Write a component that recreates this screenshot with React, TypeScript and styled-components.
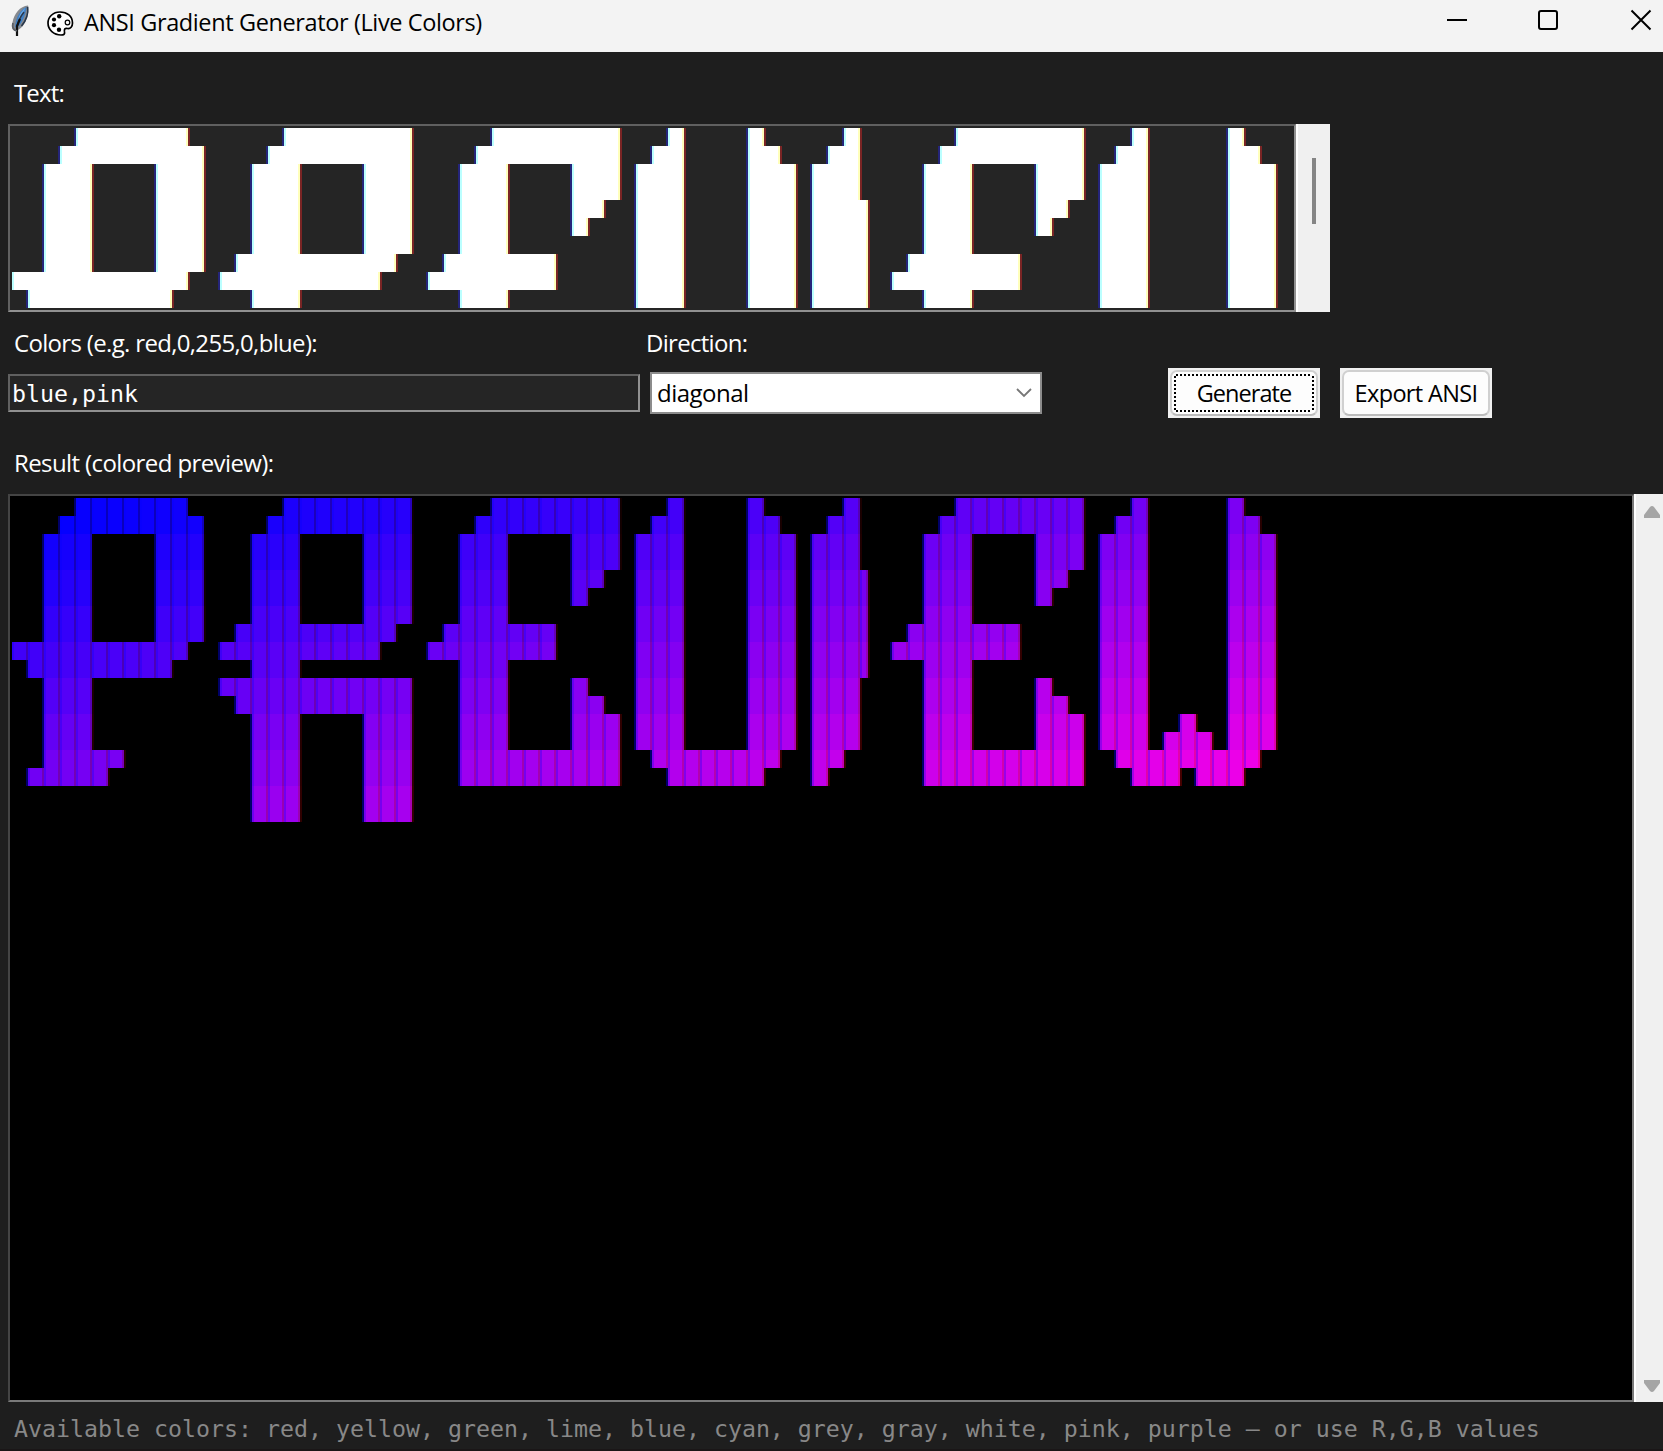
import React from "react";
import styled, { createGlobalStyle, css } from "styled-components";

const GlobalStyle = createGlobalStyle`
  *, *::before, *::after { box-sizing: border-box; }
  html, body { margin: 0; padding: 0; background: #1e1e1e; }
`;

const UI_FONT = `"Open Sans", "Noto Sans", sans-serif`;
const MONO_FONT = `"DejaVu Sans Mono", "Liberation Mono", monospace`;

/* ---------- block lettering ---------- */

type Letter = { width: number; lines: string[] };

const BAR = "  ███    ███";

const P: Letter = {
  width: 13,
  lines: ["   ▄███████▄", BAR, BAR, BAR, "▀█████████▀", "  ███", "  ███", " ▄████▀"],
};
const R: Letter = {
  width: 13,
  lines: ["   ▄████████", BAR, BAR, " ▄███▄▄▄▄██▀", "▀▀███▀▀▀▀▀", "▀███████████", BAR, BAR, BAR],
};
const E: Letter = {
  width: 13,
  lines: ["   ▄████████", BAR, "  ███    █▀", " ▄███▄▄▄", "▀▀███▀▀▀", "  ███    █▄", BAR, "  ██████████"],
};
const V: Letter = {
  width: 11,
  lines: [" ▄█    █▄", ...Array(6).fill("███    ███"), " ▀██████▀"],
};
const I: Letter = {
  width: 5,
  lines: [" ▄█", "███", "███▌", "███▌", "███▌", "███", "███", "█▀"],
};
const W: Letter = {
  width: 11,
  lines: [" ▄█     █▄", ...Array(5).fill("███     ███"), "███ ▄█▄ ███", " ▀███▀███▀"],
};

const LINE_COUNT = 9;
const ART: string[] = Array.from({ length: LINE_COUNT }, (_, y) =>
  [P, R, E, V, I, E, W].map((l) => (l.lines[y] ?? "").padEnd(l.width)).join("")
);
const ART_WIDTH = 79;

type Run = { gap: number; size: number };

/* Splits the upper or lower half of a line into solid runs, in half-cell units. */
function halfRuns(line: string, half: "▀" | "▄"): Run[] {
  const runs: Run[] = [];
  let gap = 0;
  let open = false;
  for (const ch of line) {
    if (ch === "█" || ch === half || ch === "▌") {
      const size = ch === "▌" ? 1 : 2;
      if (open) runs[runs.length - 1].size += size;
      else {
        runs.push({ gap, size });
        gap = 0;
      }
      open = ch !== "▌";
      if (ch === "▌") gap = 1;
    } else {
      open = false;
      gap += 2;
    }
  }
  return runs;
}

/* ---------- window frame ---------- */

const Window = styled.div`
  width: 1663px;
  height: 1451px;
  display: flex;
  flex-direction: column;
  overflow: hidden;
  background: #1e1e1e;
  border-bottom: 2px solid #1a1617;
  font-family: ${UI_FONT};
  color: #fff;
`;

const TitleBar = styled.header`
  height: 52px;
  flex: none;
  display: flex;
  align-items: flex-start;
  background: #f3f3f3;
  color: #000;
  padding: 0 11px 0 10px;
`;

const Title = styled.h1`
  margin: 6px auto 0 10px;
  font-size: 23.5px;
  font-weight: 400;
  line-height: 33px;
  letter-spacing: -0.38px;
  white-space: nowrap;
`;

const FeatherIcon = styled.svg`
  width: 20px;
  height: 32px;
  margin-top: 5px;
`;

const PaletteIcon = styled.svg`
  width: 27px;
  height: 25px;
  margin: 11px 0 0 17px;
`;

const Controls = styled.div`
  display: flex;
  gap: 71px;
  padding-top: 9px;
`;

const ControlIcon = styled.svg`
  display: block;
  width: 22px;
  height: 22px;
  overflow: visible;
  fill: none;
  stroke: #000;
  stroke-width: 2;
`;

const Body = styled.main`
  flex: 1;
  display: flex;
  flex-direction: column;
  padding-left: 8px;
`;

/* ---------- form parts ---------- */

const Label = styled.label<{ $top?: number; $bottom?: number; $spacing?: number }>`
  display: block;
  height: 32px;
  margin: ${(p) => p.$top ?? 0}px 0 ${(p) => p.$bottom ?? 0}px 0;
  padding-left: 6px;
  font-size: 24px;
  line-height: 32px;
  letter-spacing: ${(p) => p.$spacing ?? 0}px;
  white-space: nowrap;
`;

const sunken = css<{ $dark?: boolean }>`
  border: 2px solid;
  border-color: ${(p) =>
    p.$dark ? "#444 #7a7a7a #7a7a7a #444" : "#606060 #919191 #919191 #606060"};
`;

const TextRow = styled.div`
  display: flex;
  width: 1322px;
  height: 188px;
`;

const TextArea = styled.div`
  ${sunken}
  flex: 1;
  padding: 2px;
  background: #252525;
  overflow: hidden;
`;

const HalfRow = styled.div`
  display: flex;
  height: 18px;
`;

const SolidRun = styled.span<{ $gap: number; $size: number }>`
  flex: none;
  height: 18px;
  margin-left: ${(p) => p.$gap * 8 - 2}px;
  width: ${(p) => p.$size * 8 + 4}px;
  margin-right: -2px;
  background: linear-gradient(
    90deg,
    #25257a 0 2px,
    #bbffff 2px 4px,
    #fff 4px calc(100% - 4px),
    #ffffbb calc(100% - 4px) calc(100% - 2px),
    #7a2525 calc(100% - 2px)
  );

  /* The first column has no room for an outer edge. */
  ${(p) => p.$gap === 0 && "clip-path: inset(0 0 0 2px);"}
`;

const InputScroll = styled.div`
  width: 34px;
  padding: 34px 0 0 14px;
  background: #f0f0f0;
  border-left: 2px solid #fff;
`;

const Thumb = styled.div`
  width: 4px;
  height: 66px;
  background: #858585;
`;

const FieldLabels = styled.div`
  display: grid;
  grid-template-columns: 632px 1fr;
  margin-top: 15px;
`;

const Fields = styled.div`
  display: flex;
  align-items: center;
  height: 50px;
  margin-top: 9px;
`;

const Entry = styled.div`
  ${sunken}
  width: 632px;
  height: 38px;
  padding-left: 2px;
  background: #252525;
  font: 23.25px/36px ${MONO_FONT};
  white-space: nowrap;
`;

const Combo = styled.div`
  display: flex;
  align-items: center;
  justify-content: space-between;
  width: 392px;
  height: 42px;
  margin-left: 10px;
  padding: 0 8px 0 5px;
  border: 2px solid #8c8c8c;
  background: #fff;
  color: #000;
  font-size: 24px;
  line-height: 34px;
  letter-spacing: -0.5px;
`;

const Chevron = styled.svg`
  width: 16px;
  height: 10px;
  fill: none;
  stroke: #777;
  stroke-width: 1.8;
`;

const ButtonPad = styled.div<{ $left: number }>`
  width: 152px;
  height: 50px;
  margin-left: ${(p) => p.$left}px;
  padding: 2px;
  background: #f0f0f0;
`;

const Button = styled.button`
  display: flex;
  width: 148px;
  height: 46px;
  padding: 2px;
  border: 2px solid #d0d0d0;
  border-bottom-color: #bcbcbc;
  border-radius: 7px;
  background: #fdfdfd;
  color: #000;
  font-family: ${UI_FONT};
  font-size: 23.5px;
`;

const dots = (dir: string) => `repeating-linear-gradient(${dir}, #000 0 2px, transparent 2px 4px)`;

const ButtonFace = styled.span<{ $focused?: boolean; $spacing: number }>`
  flex: 1;
  height: 38px;
  line-height: 38px;
  text-align: center;
  white-space: nowrap;
  letter-spacing: ${(p) => p.$spacing}px;
  ${(p) =>
    p.$focused &&
    css`
      background: ${dots("90deg")} 2px 0 / 136px 2px no-repeat, ${dots("90deg")} 2px 100% / 136px 2px no-repeat,
        ${dots("180deg")} 0 2px / 2px 34px no-repeat, ${dots("180deg")} 100% 2px / 2px 34px no-repeat;
    `}
`;

/* ---------- preview ---------- */

const PreviewRow = styled.div`
  display: flex;
  height: 908px;
`;

const Preview = styled.div`
  ${sunken}
  width: 1626px;
  flex: none;
  padding: 2px;
  background: #000;
`;

const ArtLine = styled.div`
  display: flex;
  height: 36px;
`;

const Art = styled.div`
  isolation: isolate;
  overflow: hidden;
`;

const Blank = styled.span`
  flex: none;
  width: 16px;
`;

/* One block character, with the soft colour edges of sub-pixel text. */
const Block = styled.span<{ $ch: string }>`
  position: relative;
  flex: none;
  width: ${(p) => (p.$ch === "▌" ? 8 : 16)}px;
  margin-right: ${(p) => (p.$ch === "▌" ? 8 : 0)}px;
  height: ${(p) => (p.$ch === "▀" || p.$ch === "▄" ? 18 : 36)}px;
  margin-top: ${(p) => (p.$ch === "▄" ? 18 : 0)}px;
  background: linear-gradient(
    90deg,
    rgb(calc(var(--red) * 0.72) 0 var(--blue)) 0 2px,
    rgb(var(--red) 0 var(--blue)) 2px calc(100% - 2px),
    rgb(var(--red) 0 calc(var(--blue) * 0.74)) calc(100% - 2px)
  );

  &::before {
    content: "";
    position: absolute;
    z-index: -1;
    inset: 0 -2px;
    background: linear-gradient(
      90deg,
      #000068 0 2px,
      transparent 2px calc(100% - 2px),
      rgb(calc(var(--red) * 0.3) 0 0) calc(100% - 2px)
    );
  }
`;

const PreviewScroll = styled.div`
  flex: 1;
  display: flex;
  flex-direction: column;
  justify-content: space-between;
  padding: 12px 0 10px 8px;
  border-left: 2px solid #fff;
  background: #f0f0f0;
`;

const ScrollArrow = styled.svg`
  display: block;
  width: 16px;
  height: 12px;
  fill: #a5a5a5;
`;

const Footer = styled.footer`
  padding: 10px 0 0 6px;
  font: 23.25px/34px ${MONO_FONT};
  color: #888;
  white-space: nowrap;
`;

function InputArt() {
  return (
    <>
      {ART.slice(0, 5).flatMap((line, y) =>
        (["▀", "▄"] as const).map((half) => (
          <HalfRow key={`${y}${half}`}>
            {halfRuns(line, half).map((run, i) => (
              <SolidRun key={i} $gap={run.gap} $size={run.size} />
            ))}
          </HalfRow>
        ))
      )}
    </>
  );
}

function GradientArt() {
  return (
    <Art>
      {ART.map((line, y) => (
        <ArtLine key={y}>
          {[...line].map((ch, x) => {
            if (ch === " ") return <Blank key={x} />;
            const t = (x / (ART_WIDTH - 1) + y / (LINE_COUNT - 1)) / 2;
            const colour = { "--red": Math.round(255 * t), "--blue": Math.round(255 - 25 * t) };
            return <Block key={x} $ch={ch} style={colour as React.CSSProperties} />;
          })}
        </ArtLine>
      ))}
    </Art>
  );
}

export default function App() {
  return (
    <>
      <GlobalStyle />
      <Window>
        <TitleBar>
          <FeatherIcon viewBox="0 0 20 32">
            <path d="M18 0.500C10 1 4 9 2.500 17.500c-1 4 0 7 2 8l2.500 0c5-2 9-8 10.500-15 1-4 1.500-8 .5-10z" fill="#85898f" />
            <path d="M16.500 2C10 5 6 12 5 22l2 1c5-5 8.500-12 9.500-21z" fill="#3f7fc4" />
            <path d="M15 3C11 7 9 10 8 16l5-7z" fill="#6ba9e6" />
            <path d="M14 7C10 12 8 17 7 22M17.500 2c1 6-1 13-6 19" fill="none" stroke="#27364a" strokeWidth="1.5" />
            <path d="M10 14L7 21v10" fill="none" stroke="#111" strokeWidth="2.200" />
            <path d="M3 18c-1 4 0 7 4 8" fill="none" stroke="#5b5f66" strokeWidth="1.800" />
          </FeatherIcon>
          <PaletteIcon viewBox="0 0 27 25">
            <path
              d="M13 1C6 1 1 6 1 12c0 7 6 12 13 12 3 0 4-1 3.500-3-.5-3 .5-4 3-3.500 3 .5 5-2 5-5.500C25.500 5 20 1 13 1z"
              fill="#fff"
              stroke="#000"
              strokeWidth="1.7"
            />
            <g fill="#000">
              <circle cx="12.200" cy="5.200" r="2.200" />
              <circle cx="7" cy="8.500" r="2.100" />
              <circle cx="7" cy="14.200" r="2.100" />
              <circle cx="12" cy="18.800" r="2.200" />
            </g>
            <circle cx="20.500" cy="11.500" r="2.300" fill="none" stroke="#000" strokeWidth="1.200" />
          </PaletteIcon>
          <Title>ANSI Gradient Generator (Live Colors)</Title>
          <Controls>
            <ControlIcon viewBox="0 0 22 22">
              <path d="M3 11h20" />
            </ControlIcon>
            <ControlIcon viewBox="0 0 22 22">
              <rect x="2" y="2" width="18" height="18" rx="2" />
            </ControlIcon>
            <ControlIcon viewBox="0 0 22 22">
              <path d="M1.500 1.500l19 19M20.500 1.500l-19 19" />
            </ControlIcon>
          </Controls>
        </TitleBar>

        <Body>
          <Label $top={25} $bottom={15} $spacing={-0.85}>
            Text:
          </Label>
          <TextRow>
            <TextArea>
              <InputArt />
            </TextArea>
            <InputScroll>
              <Thumb />
            </InputScroll>
          </TextRow>

          <FieldLabels>
            <Label $spacing={-0.67}>Colors (e.g. red,0,255,0,blue):</Label>
            <Label $spacing={-0.7}>Direction:</Label>
          </FieldLabels>
          <Fields>
            <Entry>blue,pink</Entry>
            <Combo>
              diagonal
              <Chevron viewBox="0 0 16 10">
                <path d="M1 1l7 7 7-7" />
              </Chevron>
            </Combo>
            <ButtonPad $left={126}>
              <Button>
                <ButtonFace $focused $spacing={-0.95}>
                  Generate
                </ButtonFace>
              </Button>
            </ButtonPad>
            <ButtonPad $left={20}>
              <Button>
                <ButtonFace $spacing={-0.65}>Export ANSI</ButtonFace>
              </Button>
            </ButtonPad>
          </Fields>

          <Label $top={29} $bottom={15} $spacing={-0.6}>
            Result (colored preview):
          </Label>
          <PreviewRow>
            <Preview $dark>
              <GradientArt />
            </Preview>
            <PreviewScroll>
              <ScrollArrow viewBox="0 0 16 12">
                <path d="M0 12V9L6 1q2-2 4 0l6 8v3z" />
              </ScrollArrow>
              <ScrollArrow viewBox="0 0 16 12">
                <path d="M0 0v3l6 8q2 2 4 0l6-8V0z" />
              </ScrollArrow>
            </PreviewScroll>
          </PreviewRow>
          <Footer>
            Available colors: red, yellow, green, lime, blue, cyan, grey, gray, white, pink, purple — or use R,G,B
            values
          </Footer>
        </Body>
      </Window>
    </>
  );
}
